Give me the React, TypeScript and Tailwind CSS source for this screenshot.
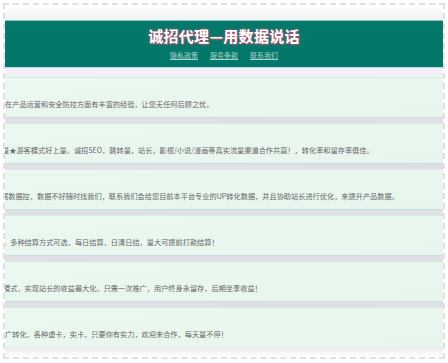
const rows = [
  { text: "在产品运营和安全防控方面有丰富的经验，让您无任何后顾之忧。", shift: "ml-0" },
  { text: "量★游客模式好上量。诚招SEO，跳转量，站长，影视/小说/漫画等真实流量渠道合作共赢！，转化率和留存率俱佳。", shift: "-ml-[3px]" },
  { text: "据数据控，数据不好随时找我们，联系我们会给您目前本平台专业的UP转化数据，并且协助站长进行优化，来提升产品数据。", shift: "-ml-[4px]" },
  { text: "，多种结算方式可选，每日结算，日清日结，量大可提前打款结算！", shift: "-ml-[2px]" },
  { text: "模式，实现站长的收益最大化。只需一次推广，用户终身永留存，后期坐享收益！", shift: "-ml-[2px]" },
  { text: "广转化，各种虚卡，实卡，只要你有实力，欢迎来合作，每天量不停！", shift: "ml-0" },
];

const links = ["隐私政策", "服务条款", "联系我们"];

export default function App() {
  return (
    <div
      className="w-[448px] h-[363px] bg-white p-[3px]"
      style={{ fontFamily: '"Noto Sans CJK SC", "Liberation Sans", sans-serif' }}
    >
      <div className="h-[356px] border-2 border-dashed border-[#e0e0e0] flex flex-col overflow-hidden">
        <div className="h-[15px] shrink-0 bg-gradient-to-b from-white to-[#f1f2f2]" />

        <div className="h-[47px] shrink-0 bg-[#03786a] border-t border-[#8fc4bb] flex flex-col items-center pt-[4px]">
          <h1
            className="text-[15px] leading-[22px] font-bold text-white tracking-[0.3px]"
            style={{ textShadow: "0 0 3px #c2607a, 1px 1px 1px #a34d66" }}
          >
            诚招代理—用数据说话
          </h1>
          <div className="flex gap-[12px] mt-[3px]">
            {links.map((l) => (
              <a key={l} className="text-[7px] leading-[10px] text-[#a9d3cc] underline">
                {l}
              </a>
            ))}
          </div>
        </div>

        <div className="h-[10px] shrink-0 bg-[#f1f0f7] border-t border-[#b9d9d3]" />

        <div className="flex flex-col">
          {rows.map((r, i) => (
            <div key={i} className="flex flex-col">
              <div className="h-[40px] bg-gradient-to-br from-[#ebf8f0] to-[#e7f5ed] border-t border-[#d6ebe0] overflow-hidden pt-[21px]">
                <p className={`${r.shift} whitespace-nowrap text-[7.2px] leading-[10px] text-[#666666]`}>{r.text}</p>
              </div>
              {i < rows.length - 1 && (
                <div className="h-[6px] bg-[#dfe0e6] border-t border-[#c9dde0]" />
              )}
            </div>
          ))}
        </div>

        <div className="flex-1 bg-gradient-to-b from-[#e8eae9] to-white" />
      </div>
    </div>
  );
}
